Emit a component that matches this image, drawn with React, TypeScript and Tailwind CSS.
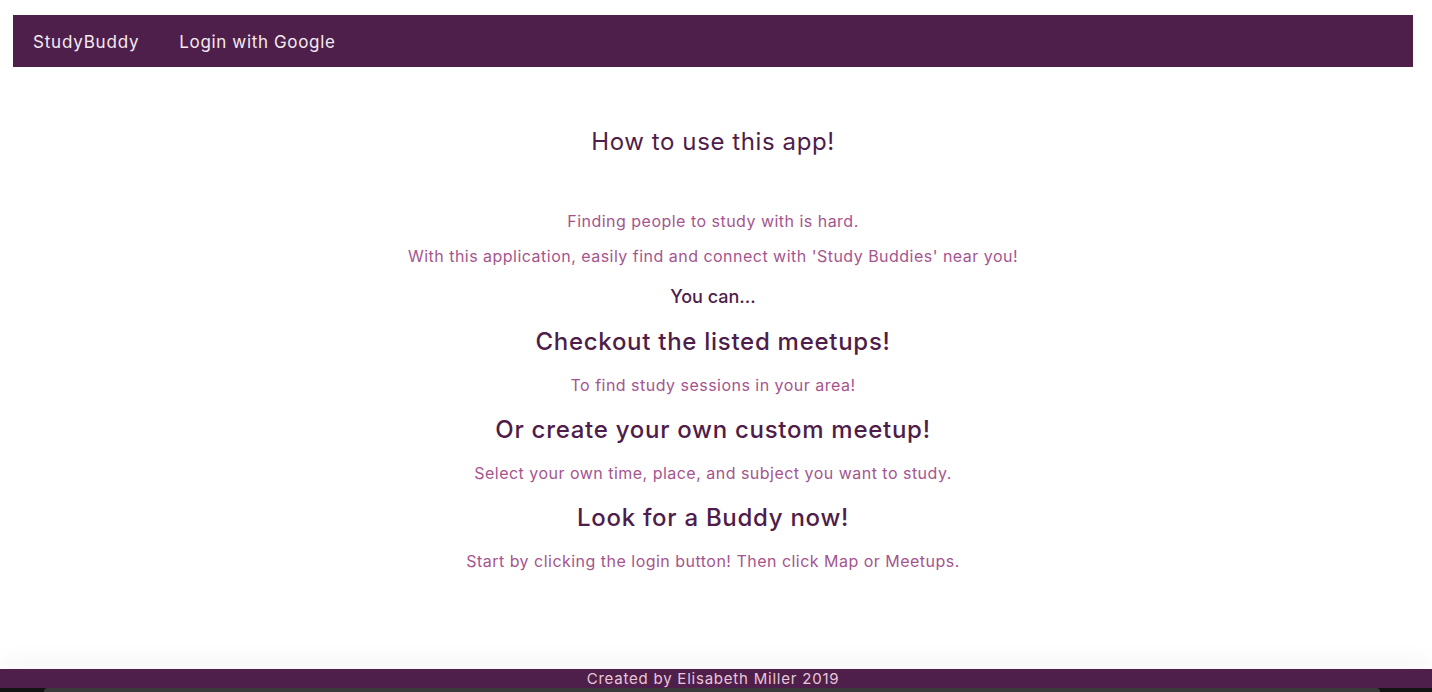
export default function App() {
  const heading = 'text-[24px] leading-[30px] font-medium tracking-[0.72px] text-[#4e1d4a]';
  const para = 'text-[16px] leading-[24px] tracking-[0.48px] text-[#a5558e]';

  return (
    <div className="h-[692px] flex flex-col bg-white font-['Inter',sans-serif] overflow-hidden">
      {/* Navbar */}
      <div className="pt-[15px] pl-[13px]">
        <nav className="w-[1400px] h-[52px] bg-[#4f1f4b] flex items-center pt-[3px] pl-[20px] gap-[40px] text-[17px] text-[#f5eaf0]">
          <span className="tracking-[0.8px]">StudyBuddy</span>
          <span className="tracking-[0.65px]">Login with Google</span>
        </nav>
      </div>

      {/* Main content */}
      <main className="flex-1 pl-[13px]">
        <div className="w-[1400px] flex flex-col items-center text-center">
          <h1 className="mt-[60px] text-[24px] leading-[30px] tracking-[0.6px] text-[#4e1d4a]">How to use this app!</h1>
          <p className={`mt-[52px] ${para}`}>Finding people to study with is hard.</p>
          <p className={`mt-[11px] ${para}`}>
            With this application, easily find and connect with 'Study Buddies' near you!
          </p>
          <h3 className="mt-[17px] text-[18px] leading-[24px] font-medium text-[#4e1d4a]">You can...</h3>
          <h2 className={`mt-[18px] ${heading}`}>Checkout the listed meetups!</h2>
          <p className={`mt-[16px] ${para}`}>To find study sessions in your area!</p>
          <h2 className={`mt-[18px] ${heading}`}>Or create your own custom meetup!</h2>
          <p className={`mt-[16px] ${para}`}>Select your own time, place, and subject you want to study.</p>
          <h2 className={`mt-[18px] ${heading}`}>Look for a Buddy now!</h2>
          <p className={`mt-[16px] ${para}`}>Start by clicking the login button! Then click Map or Meetups.</p>
        </div>
      </main>

      {/* Footer */}
      <footer className="h-[19px] bg-[#4f1f4b] flex items-center justify-center pr-[6px] text-[15px] leading-[19px] tracking-[0.78px] text-[#e9c7d8] shadow-[0_-12px_20px_rgba(0,0,0,0.035)]">
        Created by Elisabeth Miller 2019
      </footer>
      <div className="h-[4px] bg-[#141414] px-[44px] pr-[52px]">
        <div className="h-full bg-[#3a3a3a] rounded-t-[4px]" />
      </div>
    </div>
  );
}
